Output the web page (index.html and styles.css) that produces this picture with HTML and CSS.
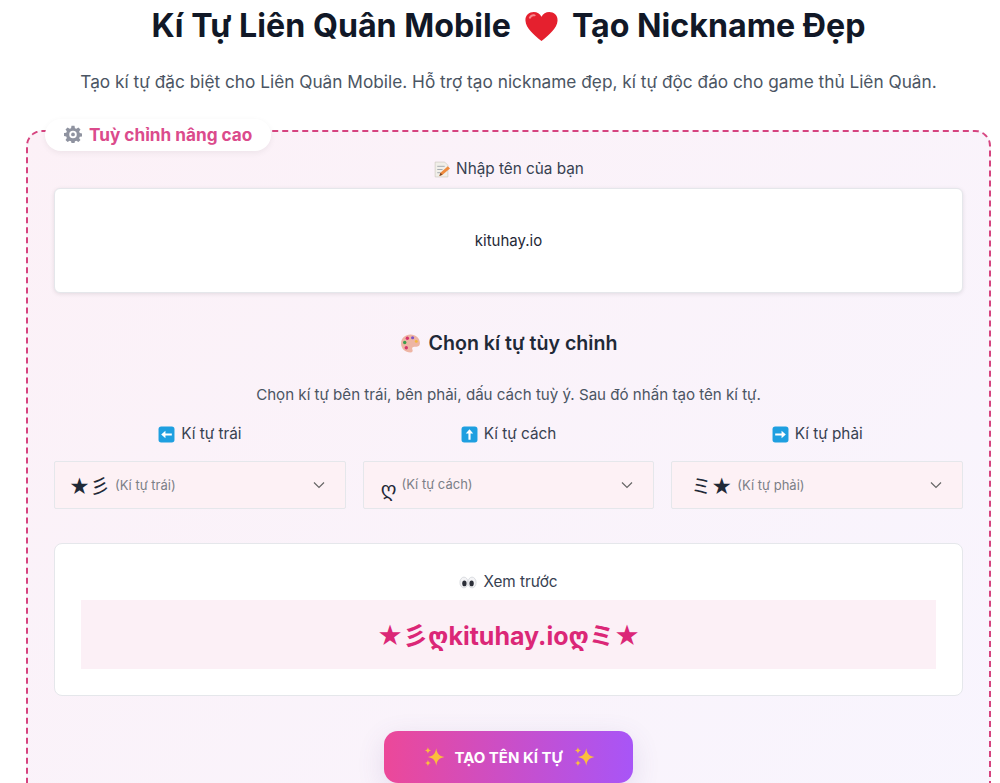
FILE: index.html
```html
<!DOCTYPE html>
<html lang="vi">
  <head>
    <meta charset="UTF-8" />
    <meta name="viewport" content="width=device-width, initial-scale=1.0" />
    <title>Kí Tự Liên Quân Mobile</title>
    <link rel="stylesheet" href="styles.css">
  </head>
  <body>
    <div class="page">
      <h1 class="title">
        <span>Kí Tự Liên Quân Mobile</span>
        <svg class="heart" viewBox="0 0 36 36"><path d="M18 33C10 26 2 20 1.500 12C1 6 5.500 3 10 3C13.500 3 16.500 5 18 8C19.500 5 22.500 3 26 3C30.500 3 35 6 34.500 12C34 20 26 26 18 33Z" fill="#e5202e"/><path d="M6 9C7 7 9 6 11 6.500" stroke="#f78a8f" stroke-width="2" fill="none" stroke-linecap="round"/></svg>
        <span>Tạo Nickname Đẹp</span>
      </h1>
      <p class="lead">Tạo kí tự đặc biệt cho Liên Quân Mobile. Hỗ trợ tạo nickname đẹp, kí tự độc đáo cho game thủ Liên Quân.</p>

      <div class="panel">
        <div class="legend">
          <svg class="gear" viewBox="0 0 24 24"><path fill="#8f93a0" fill-rule="evenodd" d="M10 1h4l.6 3.200 1.900.8L19.200 3.200 22 6l-1.800 2.700.8 1.900 3 .6v4l-3 .6-.8 1.900L22 20l-2.800 2.800-2.700-1.800-1.900.8L14 24h-4l-.6-2.200-1.900-.8L4.800 22.800 2 20l1.800-2.700-.8-1.900-3-.6v-4l3-.6.8-1.900L2 6l2.800-2.800L7.500 5l1.900-.8zM12 7.500a5 5 0 1 0 0 10 5 5 0 0 0 0-10z"/><circle cx="12" cy="12.500" r="2.500" fill="#8f93a0"/></svg>
          <span>Tuỳ chỉnh nâng cao</span>
        </div>

        <div class="label name-label">
          <svg class="ico" viewBox="0 0 16 16"><path d="M2 1h9l3 3v11H2z" fill="#f1efe9" stroke="#c9c5bc" stroke-width=".6"/><path d="M4 5h7M4 8h5M4 11h3" stroke="#9aa0a8" stroke-width=".8"/><path d="M6 14l1-3 7-6 2 2-7 6z" fill="#ef8a3c"/><path d="M6 14l1-3 2 2z" fill="#7c4a2a"/></svg>
          <span>Nhập tên của bạn</span>
        </div>
        <div class="name-box">kituhay.io</div>

        <h2 class="subtitle">
          <svg class="palette" viewBox="0 0 20 20"><path d="M10 1.500C5 1.500 1 5 1 10s4 8.500 9 8.500c2 0 2.500-1.500 1.800-2.800-.8-1.500.2-2.700 2-2.700h2.200c1.800 0 3-1.300 3-3.200C19 5 15 1.500 10 1.500z" fill="#eeb5a4"/><circle cx="7" cy="5" r="1.600" fill="#d6336c"/><circle cx="12" cy="4.500" r="1.500" fill="#7a52c7"/><circle cx="4.500" cy="9" r="1.600" fill="#3b9e4c"/><circle cx="6" cy="14" r="1.600" fill="#d6336c"/><circle cx="15.500" cy="8" r="1.400" fill="#f3b73e"/></svg>
          <span>Chọn kí tự tùy chỉnh</span>
        </h2>
        <p class="hint">Chọn kí tự bên trái, bên phải, dấu cách tuỳ ý. Sau đó nhấn tạo tên kí tự.</p>

        <div class="picks">
          <div class="pick">
            <div class="label">
              <svg class="ico" viewBox="0 0 16 16"><rect x="0.500" y="0.500" width="15" height="15" rx="2.500" fill="#1e9fe0"/><path d="M3 8l4-3.500V7h6v2H7v2.500z" fill="#fff"/></svg>
              <span>Kí tự trái</span>
            </div>
            <div class="select">
              <span class="glyph glyph-left">★彡</span>
              <span class="placeholder">(Kí tự trái)</span>
              <svg class="chev" viewBox="0 0 12 8"><path d="M1 1.500l5 5 5-5" fill="none" stroke="#666" stroke-width="1.200"/></svg>
            </div>
          </div>
          <div class="pick">
            <div class="label">
              <svg class="ico" viewBox="0 0 16 16"><rect x="0.500" y="0.500" width="15" height="15" rx="2.500" fill="#1e9fe0"/><path d="M8 3l3.500 4H9v6H7V7H4.500z" fill="#fff"/></svg>
              <span>Kí tự cách</span>
            </div>
            <div class="select">
              <span class="glyph glyph-low">ღ</span>
              <span class="placeholder placeholder-high">(Kí tự cách)</span>
              <svg class="chev" viewBox="0 0 12 8"><path d="M1 1.500l5 5 5-5" fill="none" stroke="#666" stroke-width="1.200"/></svg>
            </div>
          </div>
          <div class="pick">
            <div class="label">
              <svg class="ico" viewBox="0 0 16 16"><rect x="0.500" y="0.500" width="15" height="15" rx="2.500" fill="#1e9fe0"/><path d="M13 8L9 4.500V7H3v2h6v2.500z" fill="#fff"/></svg>
              <span>Kí tự phải</span>
            </div>
            <div class="select">
              <span class="glyph glyph-right">ミ★</span>
              <span class="placeholder">(Kí tự phải)</span>
              <svg class="chev" viewBox="0 0 12 8"><path d="M1 1.500l5 5 5-5" fill="none" stroke="#666" stroke-width="1.200"/></svg>
            </div>
          </div>
        </div>

        <div class="preview">
          <div class="label">
            <svg class="eyes" viewBox="0 0 20 14"><ellipse cx="5.500" cy="7" rx="4.500" ry="6" fill="#f4f4f6" stroke="#c9ccd3" stroke-width=".7"/><ellipse cx="14.500" cy="7" rx="4.500" ry="6" fill="#f4f4f6" stroke="#c9ccd3" stroke-width=".7"/><ellipse cx="6" cy="8" rx="2.400" ry="3.200" fill="#2c2f38"/><ellipse cx="14" cy="8" rx="2.400" ry="3.200" fill="#2c2f38"/></svg>
            <span>Xem trước</span>
          </div>
          <div class="preview-text">★彡ღkituhay.ioღミ★</div>
        </div>

        <div class="actions">
          <button class="create">
            <svg class="spark" viewBox="0 0 20 20"><path d="M12 2c.8 5 2.500 7 7.500 8-5 1-6.700 3-7.500 8-.8-5-2.500-7-7.500-8 5-1 6.700-3 7.500-8zM4.500 1c.3 2 1 2.800 3 3-2 .3-2.700 1-3 3-.3-2-1-2.700-3-3 2-.2 2.700-1 3-3zM4.500 12.500c.3 2 1 2.700 3 3-2 .3-2.700 1-3 3-.3-2-1-2.700-3-3 2-.3 2.700-1 3-3z" fill="#fbbf3c"/></svg>
            <span>TẠO TÊN KÍ TỰ</span>
            <svg class="spark" viewBox="0 0 20 20"><path d="M12 2c.8 5 2.500 7 7.500 8-5 1-6.700 3-7.500 8-.8-5-2.500-7-7.500-8 5-1 6.700-3 7.500-8zM4.500 1c.3 2 1 2.800 3 3-2 .3-2.700 1-3 3-.3-2-1-2.700-3-3 2-.2 2.700-1 3-3zM4.500 12.500c.3 2 1 2.700 3 3-2 .3-2.700 1-3 3-.3-2-1-2.700-3-3 2-.3 2.700-1 3-3z" fill="#fbbf3c"/></svg>
          </button>
        </div>
      </div>
    </div>
  </body>
</html>
```

FILE: styles.css
```css
html, body {
  margin: 0;
  height: 783px;
  overflow: hidden;
  background: #fff;
}

body {
  font-family: Inter, "Noto Sans CJK JP", "DejaVu Sans", sans-serif;
  color: #1f2937;
}

.page {
  padding: 0 9px 0 26px;
}

.title {
  display: flex;
  justify-content: center;
  align-items: center;
  gap: 13px;
  margin: 5px 0 0;
  height: 42px;
  font-size: 32.2px;
  line-height: 42px;
  font-weight: 700;
  color: #111827;
}

.heart {
  width: 35px;
  height: 35px;
}

.lead {
  margin: 23px 0 0;
  text-align: center;
  font-size: 17.25px;
  line-height: 24px;
  color: #4b5563;
}

.panel {
  position: relative;
  margin-top: 36px;
  padding: 25px 26px 0;
  height: 700px;
  border: 2px dashed #d6437f;
  border-radius: 16px;
  background: linear-gradient(135deg, #fcf1f7, #f8f5fe);
}

.legend {
  position: absolute;
  left: 17px;
  top: -13px;
  display: flex;
  align-items: center;
  gap: 7px;
  height: 30px;
  padding: 0 19px 2px;
  background: #fff;
  border-radius: 18px;
  box-shadow: 0 2px 6px rgba(0, 0, 0, 0.06);
  font-size: 17.2px;
  font-weight: 700;
  color: #db4b8c;
}

.gear {
  width: 18px;
  height: 18px;
}

.label {
  display: flex;
  justify-content: center;
  align-items: center;
  gap: 6px;
  font-size: 15.3px;
  line-height: 24px;
  color: #374151;
}

.ico {
  width: 17px;
  height: 17px;
}

.eyes {
  width: 18px;
  height: 13px;
}

.name-box {
  display: flex;
  justify-content: center;
  align-items: center;
  height: 103px;
  margin-top: 7px;
  background: #fff;
  border: 1px solid #e5e7eb;
  border-radius: 6px;
  box-shadow: 0 1px 4px rgba(0, 0, 0, 0.1);
  font-size: 15px;
  color: #1f2937;
}

.subtitle {
  display: flex;
  justify-content: center;
  align-items: center;
  gap: 8px;
  margin: 35px 0 0;
  font-size: 19.6px;
  line-height: 30px;
  font-weight: 600;
  color: #1f2937;
}

.palette {
  width: 21px;
  height: 21px;
}

.hint {
  margin: 25px 0 0;
  text-align: center;
  font-size: 15.12px;
  line-height: 24px;
  color: #4b5563;
}

.picks {
  display: flex;
  gap: 17px;
  margin-top: 15px;
}

.pick {
  flex: 1;
}

.select {
  display: flex;
  align-items: center;
  height: 46px;
  margin-top: 15px;
  padding: 0 20px 0 17px;
  background: #fdf1f5;
  border: 1px solid #e5e7eb;
  border-radius: 2px;
  color: #1f2937;
}

.glyph {
  font-size: 20px;
}

.glyph-left {
  margin-left: -3px;
}

.glyph-right {
  margin-left: 2px;
}

.glyph-low {
  padding-top: 7px;
}

.placeholder {
  margin-left: 5px;
  font-size: 13px;
  color: #7b7f87;
}

.placeholder-high {
  padding-bottom: 2px;
}

.chev {
  width: 12px;
  height: 8px;
  margin-left: auto;
}

.preview {
  margin-top: 34px;
  padding: 26px 26px 26px;
  background: #fff;
  border: 1px solid #e5e7eb;
  border-radius: 8px;
}

.preview-text {
  display: flex;
  justify-content: center;
  align-items: center;
  height: 67px;
  padding-bottom: 2px;
  margin-top: 6px;
  background: #fcf0f6;
  font-size: 25px;
  font-weight: 700;
  color: #db2777;
}

.actions {
  display: flex;
  justify-content: center;
  margin-top: 35px;
}

.create {
  display: flex;
  justify-content: center;
  align-items: center;
  gap: 10px;
  width: 249px;
  height: 52px;
  border: 0;
  border-radius: 14px;
  background: linear-gradient(90deg, #ec4899, #a855f7);
  box-shadow: 0 8px 28px rgba(90, 70, 140, 0.14);
  font-family: inherit;
  font-size: 15px;
  font-weight: 700;
  color: #fff;
}

.spark {
  width: 22px;
  height: 22px;
}
```
